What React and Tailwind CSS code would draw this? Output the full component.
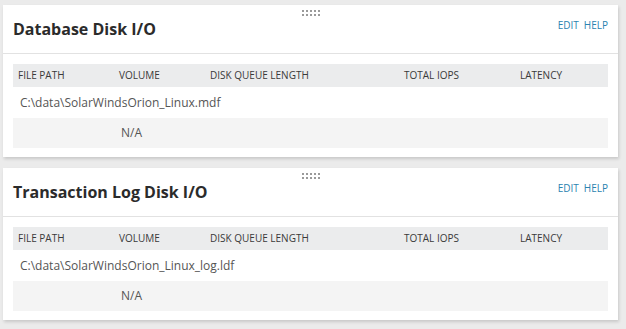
import React from "react";

const cols = [
  { label: "FILE PATH", w: "w-[101px]" },
  { label: "VOLUME", w: "w-[91px]" },
  { label: "DISK QUEUE LENGTH", w: "w-[194px]" },
  { label: "TOTAL IOPS", w: "w-[116px]" },
  { label: "LATENCY", w: "flex-1" },
];

function DragHandle() {
  return (
    <div className="absolute left-[299px] top-[5px] grid grid-cols-5 gap-x-[2px] gap-y-[2px]">
      {Array.from({ length: 10 }).map((_, i) => (
        <span key={i} className="block w-[2px] h-[2px] bg-[#9a9a9a]" />
      ))}
    </div>
  );
}

function DiskCard({ title, file }) {
  return (
    <div className="relative bg-white shadow-[1px_2px_3px_rgba(0,0,0,0.15)]">
      <DragHandle />
      <div className="flex h-[49px] items-center justify-between border-b border-[#e2e2e2] pl-[10px] pr-[10px]">
        <h2 className="text-[16px] font-bold text-[#2b2b2b]">{title}</h2>
        <div className="self-start mt-[13px] flex gap-[5px] text-[10px] text-[#2a83b0]">
          <span>EDIT</span>
          <span>HELP</span>
        </div>
      </div>
      <div className="px-[10px] pt-[10px] pb-[9px]">
        <div className="flex h-[23px] items-center bg-[#ebeced] text-[10px] text-[#3a3a3a]">
          {cols.map((c) => (
            <div key={c.label} className={`${c.w} pl-[5px]`}>{c.label}</div>
          ))}
        </div>
        <div className="flex h-[31px] items-center pl-[7px] text-[12px] text-[#555]">{file}</div>
        <div className="flex h-[30px] items-center bg-[#f4f4f4] text-[12px] text-[#555]">
          <div className="w-[101px]" />
          <div className="pl-[7px]">N/A</div>
        </div>
      </div>
    </div>
  );
}

export default function App() {
  return (
    <div className="min-h-[329px] w-[626px] bg-[#ebebeb] pl-[3px] pr-[8px] pt-[5px] font-['Open_Sans',sans-serif] flex flex-col gap-[11px]">
      <DiskCard title="Database Disk I/O" file="C:\data\SolarWindsOrion_Linux.mdf" />
      <DiskCard title="Transaction Log Disk I/O" file="C:\data\SolarWindsOrion_Linux_log.ldf" />
    </div>
  );
}
